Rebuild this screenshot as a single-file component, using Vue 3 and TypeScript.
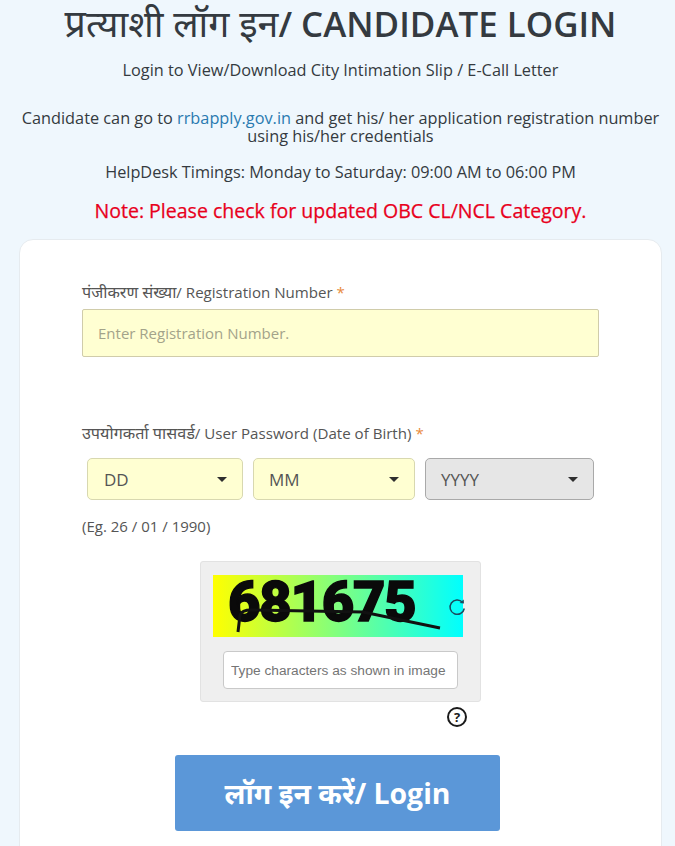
<script setup lang="ts">
const days: string[] = ['DD', 'MM', 'YYYY']
</script>

<template>
  <main class="page">
    <header class="head">
      <h1 class="title"><span class="hi">प्रत्याशी लॉग इन</span>/ CANDIDATE LOGIN</h1>
      <p class="sub">Login to View/Download City Intimation Slip / E-Call Letter</p>
      <p class="info">Candidate can go to <a class="link" href="#">rrbapply.gov.in</a> and get his/ her application registration number using his/her credentials</p>
      <p class="help">HelpDesk Timings: Monday to Saturday: 09:00 AM to 06:00 PM</p>
      <p class="note">Note: Please check for updated OBC CL/NCL Category.</p>
    </header>

    <section class="card">
      <label class="label"><span class="hi-label">पंजीकरण संख्या</span>/ Registration Number <span class="req">*</span></label>
      <input class="reg" type="text" placeholder="Enter Registration Number." />

      <label class="label pw"><span class="hi-label">उपयोगकर्ता पासवर्ड</span>/ User Password (Date of Birth) <span class="req">*</span></label>
      <div class="dob">
        <div v-for="d in days" :key="d" class="sel" :class="'sel-' + d">
          <span>{{ d }}</span>
          <i class="caret"></i>
        </div>
      </div>
      <p class="eg">(Eg. 26 / 01 / 1990)</p>

      <div class="captcha">
        <div class="cap-img">
          <span class="digits">681675</span>
          <svg class="strike" viewBox="0 0 250 62" width="250" height="62">
            <path d="M25 57 L27 40 Q29 35 38 35 L150 37 L227 53" fill="none" stroke="#111" stroke-width="3" />
          </svg>
          <svg class="refresh" viewBox="0 0 20 20" width="20" height="20">
            <path d="M15.5 5.2 A7.2 7.2 0 1 0 17.3 11.5" fill="none" stroke="#1c4a5e" stroke-width="1.5" />
            <path d="M12.6 5.9 L17 6.6 L16.7 2.4 Z" fill="#1c4a5e" />
          </svg>
        </div>
        <input class="cap-input" type="text" placeholder="Type characters as shown in image" />
      </div>
      <div class="help-row"><span class="qmark">?</span></div>

      <button class="login" type="button">लॉग इन करें/ Login</button>
    </section>
  </main>
</template>

<style scoped>
.page {
  width: 675px;
  height: 846px;
  overflow: hidden;
  background: #eff7fd;
  font-family: "Open Sans", "Noto Sans", "Noto Sans Devanagari", "DejaVu Sans", sans-serif;
  color: #343a40;
  box-sizing: border-box;
}
.head {
  text-align: center;
  padding: 0 12px 0 18px;
}
.title {
  margin: 0 -12px;
  font-size: 34.9px;
  font-weight: 600;
  line-height: 46px;
  color: #343a40;
  white-space: nowrap;
}
.hi {
  font-weight: 400;
  font-size: 37.5px;
}
.sub {
  margin: 12px 0 0;
  font-size: 16.3px;
  line-height: 22px;
}
.info {
  margin: 27.5px -6px 0;
  font-size: 16.3px;
  line-height: 18px;
}
.link {
  color: #2a7ab0;
  text-decoration: none;
}
.help {
  margin: 16.5px 0 0;
  font-size: 16.3px;
  line-height: 22px;
}
.note {
  margin: 15px 0 0;
  font-size: 19.55px;
  line-height: 26px;
  font-weight: 500;
  color: #e8001c;
  -webkit-text-stroke: 0.25px #e8001c;
}
.card {
  margin: 15px 13px 0 19px;
  height: 640px;
  background: #fff;
  border: 1px solid #e6ebef;
  border-radius: 14px;
  padding: 41px 62px 0;
  box-sizing: border-box;
}
.label {
  display: block;
  font-size: 15.1px;
  line-height: 22px;
  color: #555;
}
.hi-label {
  font-size: 16.2px;
}
.pw {
  margin-top: 65px;
}
.req {
  color: #e98a3c;
}
.reg {
  display: block;
  width: 517px;
  height: 48px;
  margin-top: 6px;
  box-sizing: border-box;
  background: #ffffd2;
  border: 1px solid #d0ccaa;
  border-radius: 2px;
  padding: 0 15px;
  font: 15px "Open Sans", sans-serif;
  outline: none;
}
.reg::placeholder {
  color: #a3a38a;
}
.dob {
  display: flex;
  gap: 10px;
  margin: 14px 5px 0;
}
.sel {
  height: 42px;
  box-sizing: border-box;
  display: flex;
  align-items: center;
  justify-content: space-between;
  padding: 0 15px 0 16px;
  background: #ffffd2;
  border: 1px solid #d8d8b0;
  border-radius: 5px;
  font-size: 17px;
  color: #555;
}
.sel-DD { width: 156px; }
.sel-MM { width: 162px; padding-left: 15px; }
.sel-YYYY {
  width: 169px;
  padding-left: 15px;
  background: #e6e6e6;
  border-color: #a9a9a9;
}
.caret {
  width: 0;
  height: 0;
  border-left: 5px solid transparent;
  border-right: 5px solid transparent;
  border-top: 5px solid #2f2f2f;
}
.eg {
  margin: 16px 0 0;
  font-size: 15px;
  line-height: 20px;
  color: #555;
}
.captcha {
  width: 281px;
  height: 141px;
  margin: 25px 0 0 118px;
  box-sizing: border-box;
  background: #efefef;
  border: 1px solid #e2e2e2;
  border-radius: 3px;
  padding: 13px 12px 0;
}
.cap-img {
  position: relative;
  width: 250px;
  height: 62px;
  background: linear-gradient(90deg, #ffff00, #00ffff);
}
.digits {
  display: block;
  padding-left: 15px;
  font-family: "Roboto", "Liberation Sans", sans-serif;
  font-weight: 900;
  font-size: 56px;
  line-height: 54px;
  letter-spacing: -1.2px;
  color: #0a0a0a;
  -webkit-text-stroke: 1.4px #0a0a0a;
}
.strike {
  position: absolute;
  left: 0;
  top: 0;
}
.refresh {
  position: absolute;
  right: -4px;
  top: 22px;
}
.cap-input {
  display: block;
  width: 235px;
  height: 38px;
  margin: 14px 0 0 10px;
  box-sizing: border-box;
  background: #fff;
  border: 1px solid #c9c9c9;
  border-radius: 4px;
  padding: 0 7px;
  font: 13.7px "Liberation Sans", Arial, sans-serif;
  outline: none;
}
.cap-input::placeholder {
  color: #757575;
}
.help-row {
  display: flex;
  justify-content: flex-end;
  width: 385px;
  margin-top: 5px;
}
.qmark {
  width: 20px;
  height: 20px;
  box-sizing: border-box;
  border: 2px solid #1a1a1a;
  border-radius: 50%;
  display: flex;
  align-items: center;
  justify-content: center;
  font: 700 13px "Open Sans", sans-serif;
  color: #1a1a1a;
}
.login {
  display: block;
  width: 325px;
  height: 76px;
  margin: 28px 0 0 93px;
  background: #5b97d8;
  border: none;
  border-radius: 3px;
  color: #fff;
  font-family: "Open Sans", "Noto Sans", "Noto Sans Devanagari", sans-serif;
  font-size: 28.4px;
  font-weight: 700;
}
</style>
